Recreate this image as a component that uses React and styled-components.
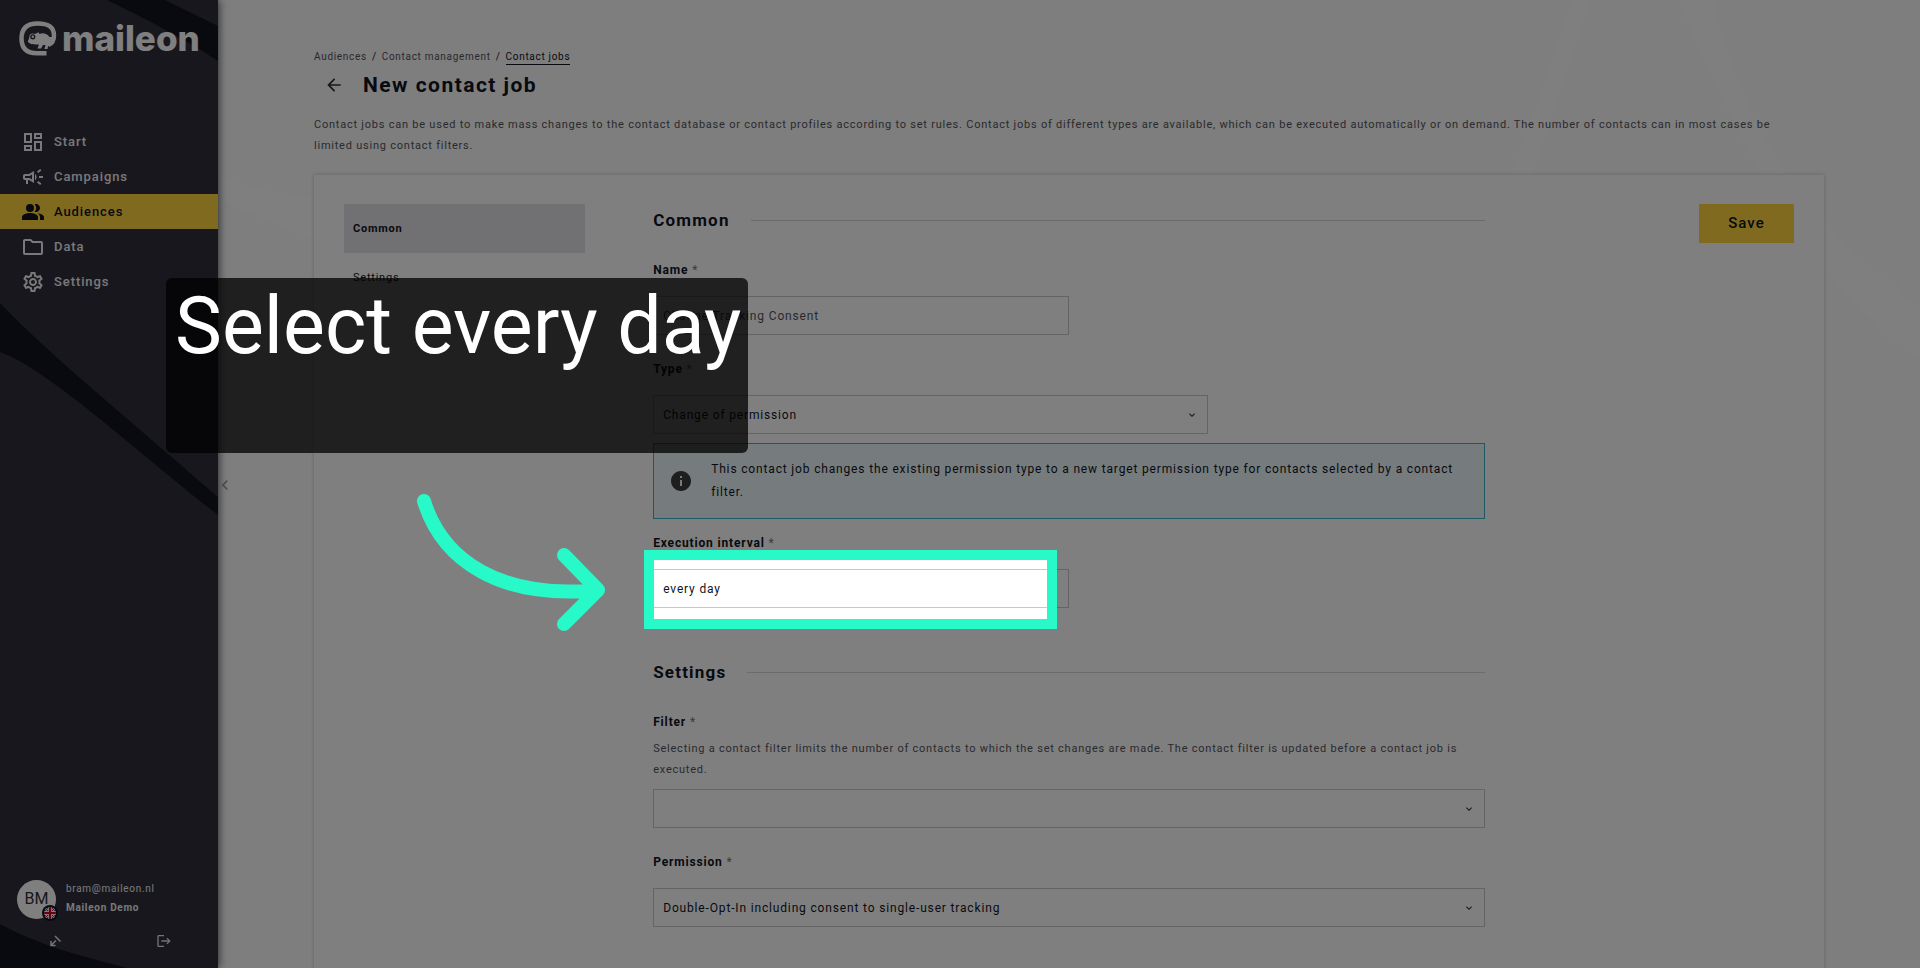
import styled, { createGlobalStyle } from 'styled-components';
import {
  MdArrowBack,
  MdInfo,
  MdKeyboardArrowDown,
  MdKeyboardArrowLeft,
  MdLogout,
  MdOutlineCampaign,
  MdOutlineDashboard,
  MdOutlineFolder,
  MdOutlineSettings,
  MdPeopleAlt,
} from 'react-icons/md';

const GlobalStyle = createGlobalStyle`
  * {
    box-sizing: border-box;
    letter-spacing: 0.07em;
  }
  body {
    margin: 0;
    font-family: Roboto, "Liberation Sans", sans-serif;
    font-size: 12px;
    color: #10141e;
  }
  h1, h2, p, ul {
    margin: 0;
    padding: 0;
  }
`;

const Shell = styled.div`
  position: relative;
  display: flex;
  height: 100vh;
  overflow: hidden;
`;

const Sidebar = styled.aside`
  position: relative;
  z-index: 1;
  display: flex;
  flex-direction: column;
  flex: 0 0 218px;
  background: #302e3a;
  box-shadow: 1px 0 8px rgba(16, 20, 30, 0.7);
`;

const SidebarArt = styled.svg`
  position: absolute;
  inset: 0;
  z-index: -1;
`;

const Logo = styled.a`
  display: flex;
  align-items: center;
  gap: 5px;
  height: 34px;
  margin: 21px 0 69px 19px;
  color: white;
  font-family: Inter, "Liberation Sans", sans-serif;
  font-size: 35px;
  font-weight: 800;
  letter-spacing: 0;
  line-height: 34px;
  text-decoration: none;
`;

const NavItem = styled.a`
  display: flex;
  align-items: center;
  gap: 9px;
  height: 35px;
  padding-left: 21px;
  background: ${({ $active }) => ($active ? '#ffd53e' : 'transparent')};
  color: ${({ $active }) => ($active ? '#10141e' : '#f2f2f4')};
  font-size: 13px;
  font-weight: 500;
  text-decoration: none;
  svg {
    width: 24px;
    height: 24px;
  }
`;

const Account = styled.div`
  display: flex;
  align-items: center;
  gap: 10px;
  margin-top: auto;
  padding-left: 17px;
`;

const Avatar = styled.div`
  position: relative;
  width: 39px;
  height: 39px;
  border-radius: 50%;
  background: #fff;
  color: #302e3a;
  font-size: 16px;
  line-height: 38px;
  letter-spacing: 0;
  text-align: center;
`;

const Flag = styled.svg`
  position: absolute;
  right: -2px;
  bottom: -2px;
`;

const AccountText = styled.div`
  padding-bottom: 2px;
  color: #f2f2f4;
  font-size: 10px;
  line-height: 19px;
`;

const AccountActions = styled.div`
  display: flex;
  justify-content: space-between;
  padding: 14px 46px 19px 47px;
`;

const IconButton = styled.button`
  display: flex;
  padding: 0;
  border: none;
  background: transparent;
  color: ${({ $light }) => ($light ? '#e6e6ea' : '#302e3a')};
  cursor: pointer;
`;

const Main = styled.main`
  position: relative;
  flex: 1;
  min-width: 0;
  padding: 49px 96px 0;
  background: #fcfcfc;
`;

const MainArt = styled.svg`
  position: absolute;
  inset: 0;
  width: 100%;
  height: 100%;
`;

const CollapseButton = styled(IconButton)`
  position: absolute;
  left: -3px;
  top: 50%;
  margin-top: -9px;
  color: #a0a0a0;
`;

const Page = styled.div`
  position: relative;
`;

const Breadcrumb = styled.nav`
  display: flex;
  gap: 5px;
  font-size: 10px;
  line-height: 15px;
  a {
    color: #55535e;
    text-decoration: none;
  }
  a[aria-current] {
    border-bottom: 1px solid #10141e;
    color: #10141e;
  }
`;

const TitleRow = styled.div`
  display: flex;
  align-items: center;
  gap: 19px;
  margin: 5px 0 14px;
  padding-left: 10px;
  h1 {
    font-size: 21px;
    line-height: 30px;
  }
`;

const Help = styled.p`
  color: #55555b;
  font-size: 11px;
  line-height: 21px;
`;

const Intro = styled(Help)`
  padding-right: 24px;
`;

const Card = styled.div`
  display: grid;
  grid-template-columns: 29fr 100fr 29fr;
  gap: 68px;
  align-items: start;
  margin-top: 19px;
  padding: 29px 30px 40px;
  background: #fff;
  box-shadow: 0 0 4px rgba(0, 0, 0, 0.22);
`;

const StepLink = styled.a`
  display: block;
  padding-left: 9px;
  background: ${({ $active }) => ($active ? '#e3e2e8' : 'transparent')};
  color: #10141e;
  font-size: 11px;
  font-weight: ${({ $active }) => ($active ? 700 : 400)};
  line-height: 49px;
  text-decoration: none;
`;

const SaveButton = styled.button`
  justify-self: end;
  width: 95px;
  height: 39px;
  padding: 0 0 2px;
  border: none;
  background: #ffd53e;
  color: #10141e;
  font: 500 15px Roboto, sans-serif;
`;

const SectionTitle = styled.h2`
  display: flex;
  align-items: center;
  gap: 21px;
  margin-bottom: 24px;
  font-size: 17px;
  line-height: 32px;
  &::after {
    content: '';
    flex: 1;
    border-top: 1px solid #d6d6d6;
  }
`;

const Section = styled.section`
  margin-bottom: 48px;
`;

const Field = styled.div`
  position: relative;
  width: ${({ $width }) => $width || '100%'};
  margin-bottom: ${({ $gap = 24 }) => $gap}px;
`;

const Label = styled.label`
  display: block;
  margin-bottom: ${({ $tight }) => ($tight ? 6 : 16)}px;
  font-size: 12px;
  font-weight: 700;
  line-height: 20px;
  span {
    color: #77777d;
    font-weight: 400;
  }
`;

const FilterHelp = styled(Help)`
  margin-bottom: 9px;
`;

const Control = styled.input`
  display: block;
  width: 100%;
  height: 39px;
  padding: 0 10px 0 9px;
  border: 1px solid #c8c8c8;
  border-radius: 0;
  background: #fff;
  color: ${({ as }) => (as ? '#10141e' : '#55535e')};
  font: 400 12px Roboto, sans-serif;
  appearance: none;
`;

const SelectBox = styled.div`
  position: relative;
  svg {
    position: absolute;
    right: 10px;
    top: 14px;
    width: 12px;
    height: 12px;
    color: #302e3a;
    pointer-events: none;
  }
`;

const Info = styled.div`
  display: flex;
  align-items: center;
  gap: 18px;
  height: 76px;
  margin: -15px 0 14px;
  padding: 0 12px 0 15px;
  border: 1px solid #3bb3cb;
  background: #ecf8fb;
  line-height: 23px;
  svg {
    flex: none;
    color: #3c3c3e;
  }
`;

const Highlight = styled.div`
  position: absolute;
  z-index: 2;
  inset: 17px 12px -21px -9px;
  border: 10px solid #28f9c8;
  box-shadow: 0 0 0 4000px rgba(0, 0, 0, 0.5);
  pointer-events: none;
`;

const Caption = styled.div`
  position: absolute;
  z-index: 3;
  left: 166px;
  top: 278px;
  height: 175px;
  padding: 0 6px 0 9px;
  border-radius: 6px;
  background: rgba(0, 0, 0, 0.75);
  color: #fff;
  font-size: 79px;
  letter-spacing: 0;
  line-height: 96px;
  white-space: nowrap;
`;

const Arrow = styled.svg`
  position: absolute;
  z-index: 3;
  left: 410px;
  top: 486px;
`;

function LogoMark() {
  return (
    <svg width="38" height="35" viewBox="0 0 38 35" fill="none" aria-hidden="true">
      <path
        d="M27.5 32.300H18C7.500 32.300 2.500 27 2.500 17.500C2.500 7.500 8 2.500 18.500 2.500C29.500 2.500 35 6 35 14.500C35 20 33 22.500 29.500 24"
        stroke="#fff"
        strokeWidth="4.500"
      />
      <path
        d="M8.800 20.500C9 19 10.300 18.500 10.300 16C10.300 12.500 13.500 11.800 16 13L19.500 11.300L20.500 13C24 11.500 28 12.500 30.500 16L36 16C36 21 33 24 29 25.500L28.500 28H25.500L26.500 24H24L22 27.500H18.500L20 23.500C15 23.500 10.500 23.500 8.800 20.500Z"
        fill="#fff"
      />
      <circle cx="13.800" cy="15.800" r="1.900" fill="#fff" stroke="#302e3a" strokeWidth="1.400" />
    </svg>
  );
}

function UnionJack() {
  return (
    <Flag width="16" height="16" viewBox="0 0 16 16" aria-hidden="true">
      <clipPath id="round">
        <circle cx="8" cy="8" r="6" />
      </clipPath>
      <circle cx="8" cy="8" r="8" fill="#10141e" />
      <g clipPath="url(#round)">
        <path fill="#22408f" d="M0 0h16v16H0z" />
        <path d="M2 2l12 12M14 2L2 14" stroke="#fff" strokeWidth="2.500" />
        <path d="M2 2l12 12M14 2L2 14" stroke="#d80027" strokeWidth="1" />
        <path d="M8 1v14M1 8h14" stroke="#fff" strokeWidth="4" />
        <path d="M8 1v14M1 8h14" stroke="#d80027" strokeWidth="2.200" />
      </g>
    </Flag>
  );
}

const navItems = [
  { label: 'Start', Icon: MdOutlineDashboard },
  { label: 'Campaigns', Icon: MdOutlineCampaign },
  { label: 'Audiences', Icon: MdPeopleAlt, active: true },
  { label: 'Data', Icon: MdOutlineFolder },
  { label: 'Settings', Icon: MdOutlineSettings },
];

function Select({ id, value }) {
  return (
    <SelectBox>
      <Control as="select" id={id} defaultValue={value}>
        <option value={value}>{value}</option>
      </Control>
      <MdKeyboardArrowDown />
    </SelectBox>
  );
}

function App() {
  return (
    <Shell>
      <GlobalStyle />
      <Sidebar>
        <SidebarArt width="218" height="968" viewBox="0 0 218 968" fill="#10141e">
          <path d="M107 0H165L218 26V61C185 39 150 21 107 0Z" />
          <path d="M0 303C50 355 110 403 218 497V515C140 455 50 370 0 352Z" />
          <path d="M0 924C40 946 85 957 127 968H0Z" />
        </SidebarArt>
        <Logo href="#">
          <LogoMark />
          maileon
        </Logo>
        <nav>
          {navItems.map(({ label, Icon, active }) => (
            <NavItem key={label} href="#" $active={active}>
              <Icon />
              {label}
            </NavItem>
          ))}
        </nav>
        <Account>
          <Avatar>
            BM
            <UnionJack />
          </Avatar>
          <AccountText>
            bram@maileon.nl
            <br />
            <b>Maileon Demo</b>
          </AccountText>
        </Account>
        <AccountActions>
          <IconButton $light aria-label="Collapse menu">
            <svg width="16" height="16" viewBox="0 0 16 16" fill="none" stroke="currentColor" strokeWidth="1.500">
              <path d="M9 7.500L4 12.500M4 8V12.500H8.500M8 3L13.500 8.500" />
            </svg>
          </IconButton>
          <IconButton $light aria-label="Log out">
            <MdLogout size={16} />
          </IconButton>
        </AccountActions>
      </Sidebar>
      <Main>
        <MainArt viewBox="0 0 1702 968" preserveAspectRatio="none" fill="#fefefe">
          <path d="M1354 0H1372L1315 175H1294Z" />
          <path d="M1460 0H1495C1540 180 1620 240 1702 310V360C1580 270 1530 160 1460 0Z" />
          <path d="M0 175C40 192 70 195 96 196V240L0 200Z" />
        </MainArt>
        <CollapseButton aria-label="Hide sidebar">
          <MdKeyboardArrowLeft size={20} />
        </CollapseButton>
        <Page>
          <Breadcrumb aria-label="Breadcrumb">
            <a href="#">Audiences</a>
            <span>/</span>
            <a href="#">Contact management</a>
            <span>/</span>
            <a href="#" aria-current="page">
              Contact jobs
            </a>
          </Breadcrumb>
          <TitleRow>
            <IconButton aria-label="Back">
              <MdArrowBack size={20} />
            </IconButton>
            <h1>New contact job</h1>
          </TitleRow>
          <Intro>
            Contact jobs can be used to make mass changes to the contact database or contact profiles according to set
            rules. Contact jobs of different types are available, which can be executed automatically or on demand. The
            number of contacts can in most cases be limited using contact filters.
          </Intro>
          <Card>
            <nav>
              <StepLink href="#common" $active>
                Common
              </StepLink>
              <StepLink href="#settings">Settings</StepLink>
            </nav>
            <form>
              <Section id="common">
                <SectionTitle>Common</SectionTitle>
                <Field $width="50%">
                  <Label htmlFor="name">
                    Name <span>*</span>
                  </Label>
                  <Control id="name" defaultValue="Change Tracking Consent" />
                </Field>
                <Field $width="66.667%">
                  <Label htmlFor="type">
                    Type <span>*</span>
                  </Label>
                  <Select id="type" value="Change of permission" />
                </Field>
                <Info>
                  <MdInfo size={24} />
                  <p>
                    This contact job changes the existing permission type to a new target permission type for contacts
                    selected by a contact filter.
                  </p>
                </Info>
                <Field $width="50%" $gap={0}>
                  <Label htmlFor="interval">
                    Execution interval <span>*</span>
                  </Label>
                  <Select id="interval" value="every day" />
                  <Highlight />
                </Field>
              </Section>
              <Section id="settings">
                <SectionTitle>Settings</SectionTitle>
                <Field>
                  <Label htmlFor="filter" $tight>
                    Filter <span>*</span>
                  </Label>
                  <FilterHelp>
                    Selecting a contact filter limits the number of contacts to which the set changes are made. The
                    contact filter is updated before a contact job is executed.
                  </FilterHelp>
                  <Select id="filter" value="" />
                </Field>
                <Field>
                  <Label htmlFor="permission">
                    Permission <span>*</span>
                  </Label>
                  <Select id="permission" value="Double-Opt-In including consent to single-user tracking" />
                </Field>
              </Section>
            </form>
            <SaveButton>Save</SaveButton>
          </Card>
        </Page>
      </Main>
      <Caption>Select every day</Caption>
      <Arrow
        width="210"
        height="160"
        viewBox="410 486 210 160"
        fill="none"
        stroke="#28f9c8"
        strokeWidth="14"
        strokeLinecap="round"
        strokeLinejoin="round"
      >
        <path d="M424 501C442 560 500 600 598 590M564 555L598 590L564 624" />
      </Arrow>
    </Shell>
  );
}

export default App;
